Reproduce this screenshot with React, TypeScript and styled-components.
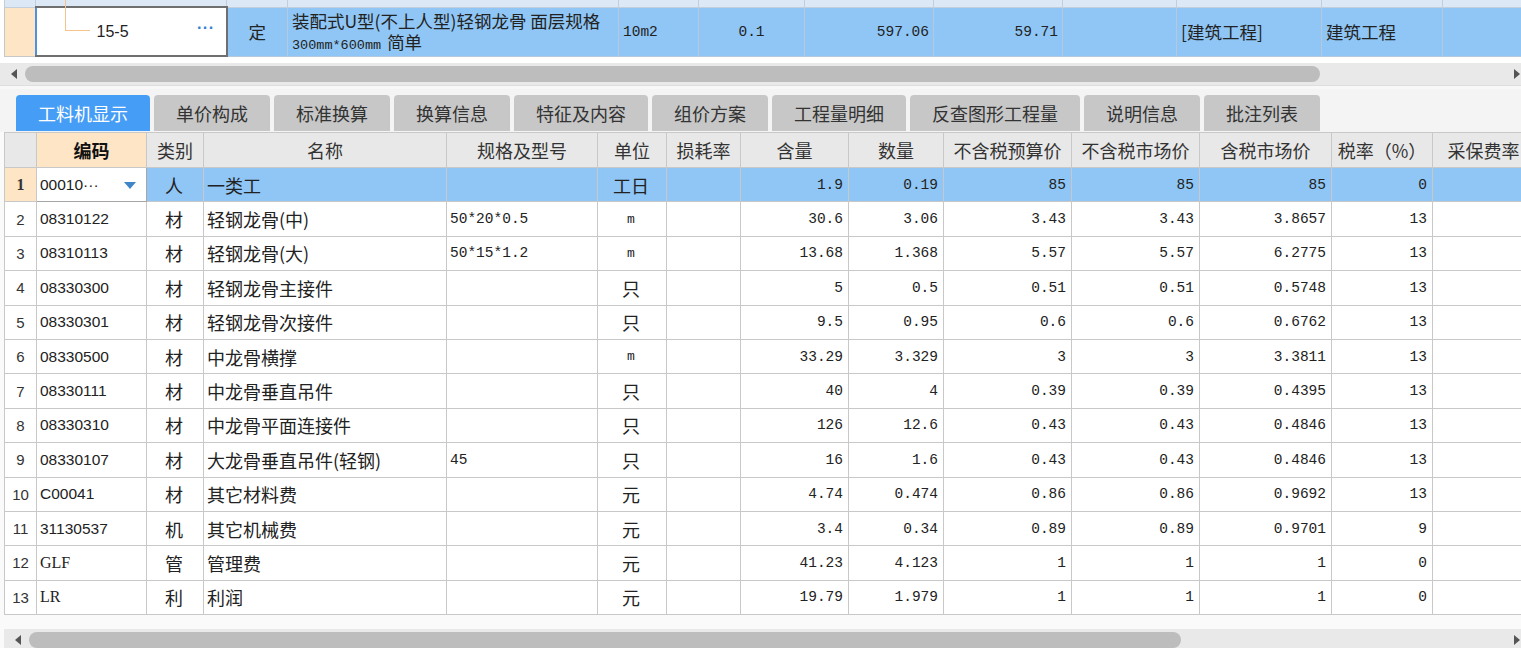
import React from "react";
import styled, { createGlobalStyle, css } from "styled-components";

const GlobalStyle = createGlobalStyle`
  html, body {
    margin: 0;
    padding: 0;
    background: #f4f4f4;
    overflow: hidden;
  }
  * {
    box-sizing: border-box;
  }
`;

const CJK = `"Noto Sans CJK SC", "Noto Sans", sans-serif`;
const MONO = `"Liberation Mono", "Noto Sans CJK SC", monospace`;
const SANS = `"Liberation Sans", "Noto Sans CJK SC", sans-serif`;
const SERIF = `"Liberation Serif", "Noto Sans CJK SC", serif`;

const fonts = { cjk: CJK, mono: MONO, sans: SANS, serif: SERIF };
type FontKind = keyof typeof fonts;

const Page = styled.div`
  width: 1521px;
  height: 648px;
  display: flex;
  flex-direction: column;
  overflow: hidden;
  color: #222;
`;

const TopPane = styled.div`
  background: #fff;
  padding-left: 4px;
  overflow: hidden;
`;

const TopTable = styled.table`
  border-collapse: collapse;
  table-layout: fixed;
  width: 1538px;
`;

const StubRow = styled.tr`
  height: 7px;

  td {
    background: #dde8f7;
    border: 1px solid #c4cedb;
    border-top: none;
    padding: 0;
  }
`;

const MainRow = styled.tr`
  height: 48px;
`;

const TopCell = styled.td<{ $align?: string; $font?: FontKind; $valign?: string }>`
  background: #8fc6f5;
  border: 1px solid #b6c9dc;
  padding: 0 4px;
  font-family: ${({ $font }) => fonts[$font || "cjk"]};
  font-size: ${({ $font }) => ($font === "mono" ? "14.5px" : "17.5px")};
  text-align: ${({ $align }) => $align || "left"};
  vertical-align: ${({ $valign }) => $valign || "middle"};
  white-space: nowrap;
  overflow: hidden;
`;

const TopIndex = styled.td`
  background: #fde5c6;
  border: 1px solid #c8c8c8;
`;

const TreeCell = styled.td`
  position: relative;
  background: #fff;
  border: 2px solid #6f6f6f;
  border-left: 2px solid #4c92e0;
  padding: 0;
  font-family: ${SANS};
  font-size: 16px;

  &::before {
    content: "";
    position: absolute;
    left: 28px;
    top: -8px;
    width: 24px;
    height: 30px;
    border-left: 1px solid #f5c48c;
    border-bottom: 1px solid #f5c48c;
  }
`;

const TreeCode = styled.span`
  display: block;
  padding-left: 60px;
`;

const More = styled.span`
  position: absolute;
  right: 11px;
  top: 11px;
  color: #2f7fd3;
  font-family: ${SANS};
  font-size: 16px;
  font-weight: bold;
  letter-spacing: 0.5px;
`;

const NameBlock = styled.div`
  line-height: 21px;
  padding-top: 2px;
`;

const Small = styled.span`
  font-family: ${MONO};
  font-size: 13.5px;
  margin-right: 6px;
`;

const ScrollTrack = styled.div<{ $top?: boolean }>`
  position: relative;
  height: 22px;
  background: #e9e9e9;
  margin-top: ${({ $top }) => ($top ? "6px" : "0")};
  margin-left: ${({ $top }) => ($top ? "-4px" : "0")};
`;

const Thumb = styled.div<{ $width: number }>`
  position: absolute;
  left: 25px;
  top: 3px;
  width: ${({ $width }) => $width}px;
  height: 16px;
  border-radius: 8px;
  background: #bdbdbd;
`;

const Arrow = styled.span<{ $dir: "left" | "right" }>`
  position: absolute;
  top: 6px;
  width: 0;
  height: 0;
  border-top: 5px solid transparent;
  border-bottom: 5px solid transparent;
  ${({ $dir }) =>
    $dir === "left"
      ? css`
          left: 11px;
          border-right: 6px solid #555;
        `
      : css`
          right: 1px;
          border-left: 6px solid #555;
        `}
`;

const Splitter = styled.div`
  height: 4px;
  background: #f8f8f8;
  border-top: 1px solid #dedede;
`;

const BottomPane = styled.div`
  flex: 1;
  display: flex;
  flex-direction: column;
  padding-top: 6px;
  min-height: 0;
`;

const TabBar = styled.div`
  display: flex;
  gap: 4px;
  padding-left: 16px;
  height: 37px;
`;

const Tab = styled.div<{ $active?: boolean }>`
  height: 36px;
  padding: 0 22px;
  display: flex;
  align-items: center;
  border-radius: 4px 4px 0 0;
  font-family: ${CJK};
  font-size: 18px;
  background: ${({ $active }) => ($active ? "#469df6" : "#c7c7c7")};
  color: ${({ $active }) => ($active ? "#fff" : "#333")};
`;

const GridWrap = styled.div`
  background: #fafafa;
  padding-left: 4px;
  overflow: hidden;
  flex: 1;
`;

const Grid = styled.table`
  border-collapse: collapse;
  table-layout: fixed;
  width: 1548px;
`;

const HeadRow = styled.tr`
  height: 35px;
`;

const Head = styled.th<{ $accent?: boolean }>`
  background: ${({ $accent }) => ($accent ? "#fde5c6" : "#e8e8e8")};
  border: 1px solid #c8c8c8;
  font-family: ${CJK};
  font-size: 18px;
  font-weight: ${({ $accent }) => ($accent ? "bold" : "normal")};
  color: ${({ $accent }) => ($accent ? "#111" : "#333")};
  white-space: nowrap;
  overflow: hidden;
  text-overflow: clip;
  padding: 0 3px;
`;

const BodyRow = styled.tr`
  height: 34.4px;
`;

const Cell = styled.td<{ $align?: string; $font?: FontKind; $active?: boolean; $size?: number }>`
  background: ${({ $active }) => ($active ? "#8fc6f5" : "#fff")};
  border: 1px solid #c8c8c8;
  padding: 0 5px 0 3px;
  font-family: ${({ $font }) => fonts[$font || "cjk"]};
  font-size: ${({ $size }) => $size}px;
  text-align: ${({ $align }) => $align || "left"};
  white-space: nowrap;
  overflow: hidden;
  color: #222;
`;

const IndexCell = styled.td<{ $active?: boolean }>`
  background: ${({ $active }) => ($active ? "#fde5c6" : "#fff")};
  border: 1px solid #c8c8c8;
  text-align: center;
  font-family: ${({ $active }) => ($active ? SERIF : SANS)};
  font-weight: ${({ $active }) => ($active ? "bold" : "normal")};
  font-size: ${({ $active }) => ($active ? "16px" : "15px")};
  color: #333;
  padding: 0;
`;

const EditCell = styled.td`
  position: relative;
  background: #fff;
  border: 1px solid #a6a6a6;
  padding: 0 3px;
  font-family: ${SANS};
  font-size: 15.5px;
`;

const Caret = styled.span`
  position: absolute;
  right: 10px;
  top: 14px;
  width: 0;
  height: 0;
  border-left: 6px solid transparent;
  border-right: 6px solid transparent;
  border-top: 7px solid #3f86c9;
`;

const Gap = styled.div`
  height: 14px;
  background: #fafafa;
`;

const topCols = [31, 191, 61, 331, 80, 106, 129, 129, 114, 145, 121, 100];
const gridCols = [32, 110, 57, 243, 151, 69, 74, 108, 95, 128, 128, 132, 101, 120];

const tabs = ["工料机显示", "单价构成", "标准换算", "换算信息", "特征及内容", "组价方案", "工程量明细", "反查图形工程量", "说明信息", "批注列表"];

const heads = ["", "编码", "类别", "名称", "规格及型号", "单位", "损耗率", "含量", "数量", "不含税预算价", "不含税市场价", "含税市场价", "税率（%）", "采保费率（"];

type Item = {
  code: string;
  codeFont?: FontKind;
  kind: string;
  name: string;
  spec: string;
  unit: string;
  qty: string;
  amount: string;
  budget: string;
  market: string;
  taxed: string;
  rate: string;
};

const items: Item[] = [
  { code: "00010···", kind: "人", name: "一类工", spec: "", unit: "工日", qty: "1.9", amount: "0.19", budget: "85", market: "85", taxed: "85", rate: "0" },
  { code: "08310122", kind: "材", name: "轻钢龙骨(中)", spec: "50*20*0.5", unit: "m", qty: "30.6", amount: "3.06", budget: "3.43", market: "3.43", taxed: "3.8657", rate: "13" },
  { code: "08310113", kind: "材", name: "轻钢龙骨(大)", spec: "50*15*1.2", unit: "m", qty: "13.68", amount: "1.368", budget: "5.57", market: "5.57", taxed: "6.2775", rate: "13" },
  { code: "08330300", kind: "材", name: "轻钢龙骨主接件", spec: "", unit: "只", qty: "5", amount: "0.5", budget: "0.51", market: "0.51", taxed: "0.5748", rate: "13" },
  { code: "08330301", kind: "材", name: "轻钢龙骨次接件", spec: "", unit: "只", qty: "9.5", amount: "0.95", budget: "0.6", market: "0.6", taxed: "0.6762", rate: "13" },
  { code: "08330500", kind: "材", name: "中龙骨横撑", spec: "", unit: "m", qty: "33.29", amount: "3.329", budget: "3", market: "3", taxed: "3.3811", rate: "13" },
  { code: "08330111", kind: "材", name: "中龙骨垂直吊件", spec: "", unit: "只", qty: "40", amount: "4", budget: "0.39", market: "0.39", taxed: "0.4395", rate: "13" },
  { code: "08330310", kind: "材", name: "中龙骨平面连接件", spec: "", unit: "只", qty: "126", amount: "12.6", budget: "0.43", market: "0.43", taxed: "0.4846", rate: "13" },
  { code: "08330107", kind: "材", name: "大龙骨垂直吊件(轻钢)", spec: "45", unit: "只", qty: "16", amount: "1.6", budget: "0.43", market: "0.43", taxed: "0.4846", rate: "13" },
  { code: "C00041", kind: "材", name: "其它材料费", spec: "", unit: "元", qty: "4.74", amount: "0.474", budget: "0.86", market: "0.86", taxed: "0.9692", rate: "13" },
  { code: "31130537", kind: "机", name: "其它机械费", spec: "", unit: "元", qty: "3.4", amount: "0.34", budget: "0.89", market: "0.89", taxed: "0.9701", rate: "9" },
  { code: "GLF", codeFont: "serif", kind: "管", name: "管理费", spec: "", unit: "元", qty: "41.23", amount: "4.123", budget: "1", market: "1", taxed: "1", rate: "0" },
  { code: "LR", codeFont: "serif", kind: "利", name: "利润", spec: "", unit: "元", qty: "19.79", amount: "1.979", budget: "1", market: "1", taxed: "1", rate: "0" },
];

function Scrollbar({ thumb, top }: { thumb: number; top?: boolean }) {
  return (
    <ScrollTrack $top={top}>
      <Arrow $dir="left" />
      <Thumb $width={thumb} />
      <Arrow $dir="right" />
    </ScrollTrack>
  );
}

function ItemRow({ item, index }: { item: Item; index: number }) {
  const active = index === 0;
  const num = (v: string) => (
    <Cell $active={active} $align="right" $font="mono" $size={14.5}>
      {v}
    </Cell>
  );
  const isCjkUnit = item.unit !== "m";

  return (
    <BodyRow>
      <IndexCell $active={active}>{index + 1}</IndexCell>
      {active ? (
        <EditCell>
          {item.code}
          <Caret />
        </EditCell>
      ) : (
        <Cell $font={item.codeFont || "sans"} $size={item.codeFont ? 16 : 15.5}>
          {item.code}
        </Cell>
      )}
      <Cell $active={active} $align="center" $size={18}>
        {item.kind}
      </Cell>
      <Cell $active={active} $size={18}>
        {item.name}
      </Cell>
      <Cell $active={active} $font="mono" $size={14.5}>
        {item.spec}
      </Cell>
      <Cell $active={active} $align="center" $font={isCjkUnit ? "cjk" : "mono"} $size={isCjkUnit ? 18 : 13}>
        {item.unit}
      </Cell>
      <Cell $active={active} />
      {num(item.qty)}
      {num(item.amount)}
      {num(item.budget)}
      {num(item.market)}
      {num(item.taxed)}
      {num(item.rate)}
      <Cell $active={active} />
    </BodyRow>
  );
}

export default function App() {
  return (
    <Page>
      <GlobalStyle />
      <TopPane>
        <TopTable>
          <colgroup>
            {topCols.map((w, i) => (
              <col key={i} style={{ width: w }} />
            ))}
          </colgroup>
          <tbody>
            <StubRow>
              {topCols.map((_, i) => (
                <td key={i} />
              ))}
            </StubRow>
            <MainRow>
              <TopIndex />
              <TreeCell>
                <TreeCode>15-5</TreeCode>
                <More>···</More>
              </TreeCell>
              <TopCell $align="center">定</TopCell>
              <TopCell $valign="top">
                <NameBlock>
                  装配式U型(不上人型)轻钢龙骨 面层规格
                  <br />
                  <Small>300mm*600mm</Small>简单
                </NameBlock>
              </TopCell>
              <TopCell $font="mono">10m2</TopCell>
              <TopCell $font="mono" $align="center">
                0.1
              </TopCell>
              <TopCell $font="mono" $align="right">
                597.06
              </TopCell>
              <TopCell $font="mono" $align="right">
                59.71
              </TopCell>
              <TopCell />
              <TopCell>[建筑工程]</TopCell>
              <TopCell>建筑工程</TopCell>
              <TopCell />
            </MainRow>
          </tbody>
        </TopTable>
        <Scrollbar top thumb={1295} />
      </TopPane>
      <Splitter />
      <BottomPane>
        <TabBar>
          {tabs.map((t, i) => (
            <Tab key={t} $active={i === 0}>
              {t}
            </Tab>
          ))}
        </TabBar>
        <GridWrap>
          <Grid>
            <colgroup>
              {gridCols.map((w, i) => (
                <col key={i} style={{ width: w }} />
              ))}
            </colgroup>
            <thead>
              <HeadRow>
                {heads.map((h, i) => (
                  <Head key={i} $accent={i === 1}>
                    {h}
                  </Head>
                ))}
              </HeadRow>
            </thead>
            <tbody>
              {items.map((item, i) => (
                <ItemRow key={item.code} item={item} index={i} />
              ))}
            </tbody>
          </Grid>
          <Gap />
          <Scrollbar thumb={1152} />
        </GridWrap>
      </BottomPane>
    </Page>
  );
}
